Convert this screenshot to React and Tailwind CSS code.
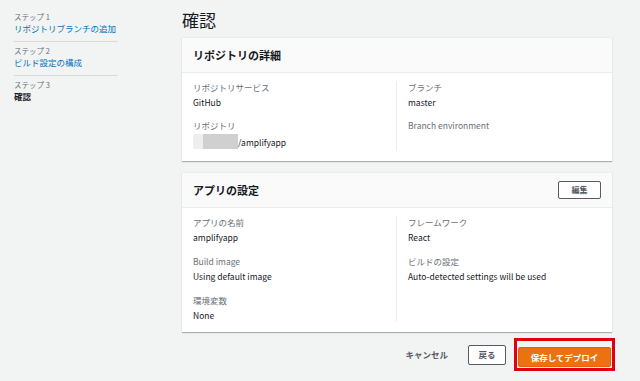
import React from "react";

const font = { fontFamily: '"Noto Sans CJK JP", "Noto Sans", sans-serif' };

function Field({ label, value, children }) {
    return (
        <div className="flex flex-col">
            <span className="text-[8.5px] leading-[12px] text-[#687078]">{label}</span>
            <span className="text-[8.5px] leading-[12px] mt-[3px] text-[#16191f]">{children ?? value}</span>
        </div>
    );
}

function Card({ title, action, children }) {
    return (
        <section className="bg-white shadow-[0_1px_1px_rgba(0,28,36,0.3)] border-t border-[#eaeded]">
            <div className="h-[35px] bg-[#fafafa] border-b border-[#eaeded] flex items-center justify-between pl-[11px] pr-[11px]">
                <h2 className="text-[11px] font-bold text-[#16191f]">{title}</h2>
                {action}
            </div>
            {children}
        </section>
    );
}

export default function App() {
    return (
        <div style={font} className="w-[640px] h-[381px] bg-[#f2f3f3] flex overflow-hidden">
            <nav className="w-[118px] pl-[14px] pt-[11px] shrink-0">
                <div className="border-b border-[#d5dbdb] pb-[6px]">
                    <p className="text-[7.5px] leading-[11px] text-[#687078]">ステップ 1</p>
                    <p className="text-[8.5px] leading-[13px] text-[#0073bb]">リポジトリブランチの追加</p>
                </div>
                <div className="border-b border-[#d5dbdb] pb-[6px] pt-[3px]">
                    <p className="text-[7.5px] leading-[11px] text-[#687078]">ステップ 2</p>
                    <p className="text-[8.5px] leading-[13px] text-[#0073bb]">ビルド設定の構成</p>
                </div>
                <div className="pt-[3px]">
                    <p className="text-[7.5px] leading-[11px] text-[#687078]">ステップ 3</p>
                    <p className="text-[8.5px] leading-[13px] font-bold text-[#16191f]">確認</p>
                </div>
            </nav>

            <main className="ml-[64px] w-[430px] pt-[9px] flex flex-col">
                <h1 className="text-[17px] leading-[22px] text-[#16191f] mb-[6px]">確認</h1>

                <Card title="リポジトリの詳細">
                    <div className="grid grid-cols-2 px-[11px] pt-[8px] pb-[10px]">
                        <div className="flex flex-col gap-[11px] border-r border-[#eaeded] pr-[11px]">
                            <Field label="リポジトリサービス" value="GitHub" />
                            <Field label="リポジトリ">
                                <span className="inline-flex items-center">
                                    <span className="inline-block w-[45px] h-[15px] bg-[linear-gradient(90deg,#eeeeee_0,#eeeeee_10px,#d0d0d0_10px,#d0d0d0_45px)]"></span>
                                    /amplifyapp
                                </span>
                            </Field>
                        </div>
                        <div className="flex flex-col gap-[11px] pl-[11px]">
                            <Field label="ブランチ" value="master" />
                            <span className="text-[8.5px] leading-[12px] text-[#687078]">Branch environment</span>
                        </div>
                    </div>
                </Card>

                <div className="h-[11px]"></div>

                <Card
                    title="アプリの設定"
                    action={
                        <button className="w-[43px] h-[18px] border border-[#545b64] rounded-[2px] bg-white text-[8px] font-bold text-[#545b64]">編集</button>
                    }
                >
                    <div className="grid grid-cols-2 px-[11px] pt-[8px] pb-[11px]">
                        <div className="flex flex-col gap-[12px] border-r border-[#eaeded] pr-[11px]">
                            <Field label="アプリの名前" value="amplifyapp" />
                            <Field label="Build image" value="Using default image" />
                            <Field label="環境変数" value="None" />
                        </div>
                        <div className="flex flex-col gap-[12px] pl-[11px]">
                            <Field label="フレームワーク" value="React" />
                            <Field label="ビルドの設定" value="Auto-detected settings will be used" />
                        </div>
                    </div>
                </Card>

                <div className="flex items-center justify-end mt-[6px] gap-[8px]">
                    <span className="text-[8.5px] font-bold text-[#545b64] mr-[12px]">キャンセル</span>
                    <button className="w-[38px] h-[20px] border border-[#545b64] rounded-[2px] bg-white text-[8.5px] font-bold text-[#545b64]">戻る</button>
                    <div className="border-[3px] border-[#e0000e] p-[1px] -mr-[3px]">
                        <button className="w-[93px] h-[20px] bg-[#ec7211] border border-[#eb5f07] rounded-[2px] text-white text-[8.5px] font-bold">保存してデプロイ</button>
                    </div>
                </div>
            </main>
        </div>
    );
}
